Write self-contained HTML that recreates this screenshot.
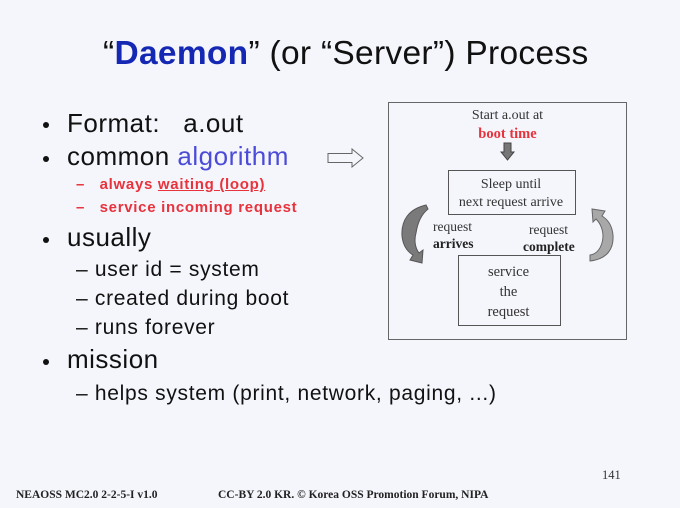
<!DOCTYPE html>
<html><head><meta charset="utf-8"><style>
body{margin:0;width:680px;height:508px;background:#f5f6fc;position:relative;overflow:hidden;font-family:"Liberation Sans","Noto Sans CJK KR",sans-serif;color:#111}
.a{position:absolute;white-space:nowrap;line-height:1}
.s{font-family:"Liberation Serif",serif}
.b1{font-size:26px;letter-spacing:0.5px}
.b2{font-size:21px;letter-spacing:0.7px}
.r{font-size:15px;font-weight:bold;color:#e8323c;letter-spacing:0.7px}
.dot{position:absolute;width:6px;height:6px;border-radius:50%;background:#111}
.box{position:absolute;border:1px solid #555}
.c{text-align:center}
</style></head><body>
<div class="a" style="left:103px;top:37px;font-size:33.5px;letter-spacing:0.3px">“<b style="color:#1428b4">Daemon</b>” (or “Server”) Process</div>

<div class="dot" style="left:43px;top:122px"></div><div class="a b1" style="left:67px;top:110px">Format:&nbsp;&nbsp; a.out</div>
<div class="dot" style="left:43px;top:156px"></div><div class="a b1" style="left:67px;top:143px">common <span style="color:#4b4bd8">algorithm</span></div>
<svg class="a" style="left:327px;top:148px" width="38" height="20"><path d="M1 5.5H25V1L36 10 25 19V14.5H1Z" fill="#f5f6fc" stroke="#666" stroke-width="1"/></svg>
<div class="a r" style="left:76px;top:177px">–&nbsp;&nbsp; always <u>waiting (loop)</u></div>
<div class="a r" style="left:76px;top:200px">–&nbsp;&nbsp; service incoming request</div>
<div class="dot" style="left:43px;top:237px"></div><div class="a b1" style="left:67px;top:224px">usually</div>
<div class="a b2" style="left:76px;top:259px">–&nbsp;user id = system</div>
<div class="a b2" style="left:76px;top:288px">–&nbsp;created during boot</div>
<div class="a b2" style="left:76px;top:317px">–&nbsp;runs forever</div>
<div class="dot" style="left:43px;top:359px"></div><div class="a b1" style="left:67px;top:346px">mission</div>
<div class="a b2" style="left:76px;top:383px">–&nbsp;helps system (print, network, paging, ...)</div>

<div class="box" style="left:388px;top:102px;width:237px;height:236px;border-color:#666"></div>
<div class="a s c" style="left:440px;top:109px;width:135px;font-size:14px;color:#333">Start a.out at</div>
<div class="a s c" style="left:440px;top:127px;width:135px;font-size:14.5px;font-weight:bold;color:#e8323c">boot time</div>
<svg class="a" style="left:500px;top:142px" width="16" height="20"><path d="M4 1H11V10H14L7.5 18 1 10H4Z" fill="#777" stroke="#444" stroke-width="1"/></svg>
<div class="box" style="left:448px;top:170px;width:126px;height:43px"></div>
<div class="a s c" style="left:448px;top:178px;width:126px;font-size:14px;color:#333">Sleep until</div>
<div class="a s c" style="left:448px;top:196px;width:126px;font-size:14px;color:#333">next request arrive</div>
<div class="a s" style="left:433px;top:220px;font-size:13.5px;color:#333">request</div>
<div class="a s" style="left:433px;top:237px;font-size:13.5px;font-weight:bold;color:#222">arrives</div>
<div class="a s" style="left:529px;top:223px;font-size:13.5px;color:#333">request</div>
<div class="a s" style="left:523px;top:240px;font-size:13.5px;font-weight:bold;color:#222">complete</div>
<div class="box" style="left:458px;top:255px;width:101px;height:69px"></div>
<div class="a s c" style="left:458px;top:265px;width:101px;font-size:14.5px;color:#333">service</div>
<div class="a s c" style="left:458px;top:285px;width:101px;font-size:14.5px;color:#333">the</div>
<div class="a s c" style="left:458px;top:305px;width:101px;font-size:14.5px;color:#333">request</div>
<svg class="a" style="left:395px;top:200px" width="40" height="72"><path d="M31 5C14 9 6 20 7 36C8 46 13 52 18 55L15 60 27 63 28 50 24 53C20 48 19 40 21 33C23 20 28 13 33 9Z" fill="#7a7a7a" stroke="#555" stroke-width="1"/></svg>
<svg class="a" style="left:583px;top:203px" width="36" height="66"><path d="M7 58C24 56 31 46 30 32C29 22 24 16 19 13L22 8 9 6 10 19 13 16C17 20 20 26 20 34C19 45 14 51 7 52Z" fill="#a8a8a8" stroke="#666" stroke-width="1"/></svg>

<div class="a s" style="left:602px;top:469px;font-size:12.5px;color:#333">141</div>
<div class="a s" style="left:16px;top:490px;font-size:11.5px;font-weight:bold;color:#222">NEAOSS MC2.0 2-2-5-I v1.0</div>
<div class="a s" style="left:218px;top:490px;font-size:11.5px;font-weight:bold;color:#222">CC-BY 2.0 KR. © Korea OSS Promotion Forum, NIPA</div>
</body></html>
